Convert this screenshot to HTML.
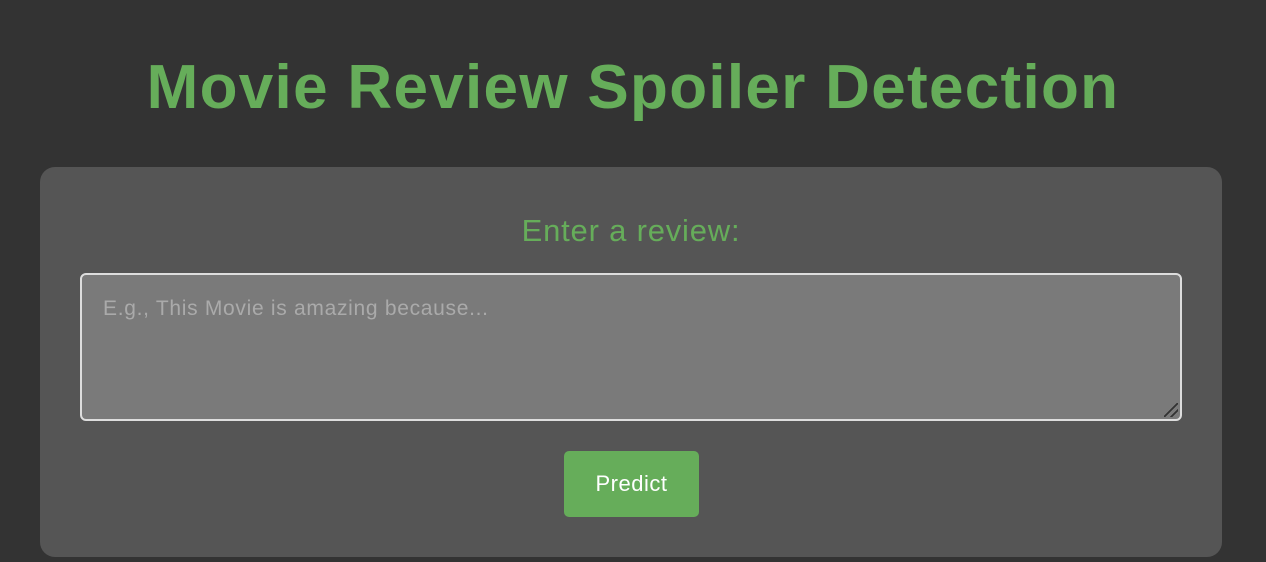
<!DOCTYPE html>
<html><head><style>
html,body{margin:0;padding:0;background:#333;width:1266px;height:562px;overflow:hidden}
h1{position:absolute;left:0;width:1266px;top:48px;margin:0;text-align:center;font-family:"Comic Sans MS","Liberation Sans",sans-serif;font-weight:bold;font-size:62px;color:#66ad5a;letter-spacing:1.3px;line-height:80px}
.card{position:absolute;left:40px;top:167px;width:1182px;height:390px;background:#555;border-radius:15px}
.lbl{position:absolute;left:0;width:1182px;top:44px;text-align:center;font-family:"Comic Sans MS","Liberation Sans",sans-serif;font-size:31px;letter-spacing:0.8px;color:#66ad5a;line-height:40px}
.ta{position:absolute;left:40px;top:106px;width:1098px;height:144px;background:#7a7a7a;border:2px solid #ddd;border-radius:6px}
.ph{position:absolute;left:21px;top:22px;font-family:"Liberation Sans",sans-serif;font-size:21px;letter-spacing:0.7px;color:#aaa}
.btn{position:absolute;left:524px;top:284px;width:135px;height:66px;background:#66ad5a;border-radius:5px;color:#fff;font-family:"Liberation Sans",sans-serif;font-size:22px;letter-spacing:0.5px;text-align:center;line-height:66px}
.grip{position:absolute;right:2px;bottom:2px;width:14px;height:14px;background:linear-gradient(135deg,transparent 45%,#333 45%,#333 55%,transparent 55%,transparent 70%,#333 70%,#333 80%,transparent 80%)}
</style></head><body>
<h1>Movie Review Spoiler Detection</h1>
<div class="card">
<div class="lbl">Enter a review:</div>
<div class="ta"><div class="ph">E.g., This Movie is amazing because...</div><div class="grip"></div></div>
<div class="btn">Predict</div>
</div>
</body></html>
